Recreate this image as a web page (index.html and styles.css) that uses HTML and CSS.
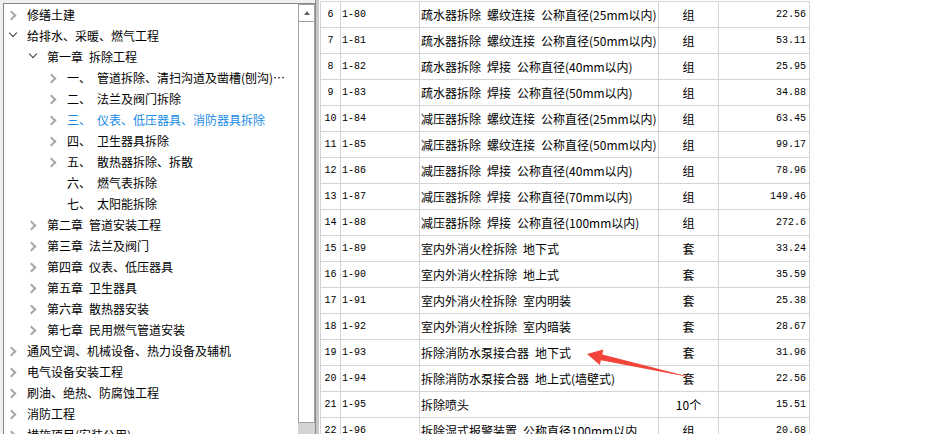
FILE: index.html
```html
<!DOCTYPE html>
<html lang="zh-CN">

<head>
    <meta charset="UTF-8">
    <title>定额库</title>
    <link rel="stylesheet" href="styles.css">
</head>

<body>
    <div class="app">
        <!-- 左侧章节树 -->
        <div class="tree-pane">
            <div class="tree">
                <div class="node l0"><i class="tw closed"></i><span>修缮土建</span></div>
                <div class="node l0"><i class="tw open"></i><span>给排水、采暖、燃气工程</span></div>
                <div class="node l1"><i class="tw open"></i><span>第一章&ensp;拆除工程</span></div>
                <div class="node l2"><i class="tw closed"></i><span>一、&ensp;管道拆除、清扫沟道及凿槽(刨沟)…</span></div>
                <div class="node l2"><i class="tw closed"></i><span>二、&ensp;法兰及阀门拆除</span></div>
                <div class="node l2 sel"><i class="tw closed"></i><span>三、&ensp;仪表、低压器具、消防器具拆除</span></div>
                <div class="node l2"><i class="tw closed"></i><span>四、&ensp;卫生器具拆除</span></div>
                <div class="node l2"><i class="tw closed"></i><span>五、&ensp;散热器拆除、拆散</span></div>
                <div class="node l2"><i class="tw"></i><span>六、&ensp;燃气表拆除</span></div>
                <div class="node l2"><i class="tw"></i><span>七、&ensp;太阳能拆除</span></div>
                <div class="node l1"><i class="tw closed"></i><span>第二章&ensp;管道安装工程</span></div>
                <div class="node l1"><i class="tw closed"></i><span>第三章&ensp;法兰及阀门</span></div>
                <div class="node l1"><i class="tw closed"></i><span>第四章&ensp;仪表、低压器具</span></div>
                <div class="node l1"><i class="tw closed"></i><span>第五章&ensp;卫生器具</span></div>
                <div class="node l1"><i class="tw closed"></i><span>第六章&ensp;散热器安装</span></div>
                <div class="node l1"><i class="tw closed"></i><span>第七章&ensp;民用燃气管道安装</span></div>
                <div class="node l0"><i class="tw closed"></i><span>通风空调、机械设备、热力设备及辅机</span></div>
                <div class="node l0"><i class="tw closed"></i><span>电气设备安装工程</span></div>
                <div class="node l0"><i class="tw closed"></i><span>刷油、绝热、防腐蚀工程</span></div>
                <div class="node l0"><i class="tw closed"></i><span>消防工程</span></div>
                <div class="node l0"><i class="tw closed"></i><span>措施项目(安装公用)</span></div>
            </div>
            <div class="vscroll">
                <div class="sb-up"></div>
                <div class="sb-thumb"></div>
            </div>
        </div>

        <div class="splitter"></div>

        <!-- 右侧定额列表 -->
        <div class="table-pane">
            <div class="grid">
                <div class="row"><div class="c-no num">6</div><div class="c-code num">1-80</div><div class="c-name">疏水器拆除&ensp;螺纹连接&ensp;公称直径(25mm以内)</div><div class="c-unit">组</div><div class="c-price num">22.56</div></div>
                <div class="row"><div class="c-no num">7</div><div class="c-code num">1-81</div><div class="c-name">疏水器拆除&ensp;螺纹连接&ensp;公称直径(50mm以内)</div><div class="c-unit">组</div><div class="c-price num">53.11</div></div>
                <div class="row"><div class="c-no num">8</div><div class="c-code num">1-82</div><div class="c-name">疏水器拆除&ensp;焊接&ensp;公称直径(40mm以内)</div><div class="c-unit">组</div><div class="c-price num">25.95</div></div>
                <div class="row"><div class="c-no num">9</div><div class="c-code num">1-83</div><div class="c-name">疏水器拆除&ensp;焊接&ensp;公称直径(50mm以内)</div><div class="c-unit">组</div><div class="c-price num">34.88</div></div>
                <div class="row"><div class="c-no num">10</div><div class="c-code num">1-84</div><div class="c-name">减压器拆除&ensp;螺纹连接&ensp;公称直径(25mm以内)</div><div class="c-unit">组</div><div class="c-price num">63.45</div></div>
                <div class="row"><div class="c-no num">11</div><div class="c-code num">1-85</div><div class="c-name">减压器拆除&ensp;螺纹连接&ensp;公称直径(50mm以内)</div><div class="c-unit">组</div><div class="c-price num">99.17</div></div>
                <div class="row"><div class="c-no num">12</div><div class="c-code num">1-86</div><div class="c-name">减压器拆除&ensp;焊接&ensp;公称直径(40mm以内)</div><div class="c-unit">组</div><div class="c-price num">78.96</div></div>
                <div class="row"><div class="c-no num">13</div><div class="c-code num">1-87</div><div class="c-name">减压器拆除&ensp;焊接&ensp;公称直径(70mm以内)</div><div class="c-unit">组</div><div class="c-price num">149.46</div></div>
                <div class="row"><div class="c-no num">14</div><div class="c-code num">1-88</div><div class="c-name">减压器拆除&ensp;焊接&ensp;公称直径(100mm以内)</div><div class="c-unit">组</div><div class="c-price num">272.6</div></div>
                <div class="row"><div class="c-no num">15</div><div class="c-code num">1-89</div><div class="c-name">室内外消火栓拆除&ensp;地下式</div><div class="c-unit">套</div><div class="c-price num">33.24</div></div>
                <div class="row"><div class="c-no num">16</div><div class="c-code num">1-90</div><div class="c-name">室内外消火栓拆除&ensp;地上式</div><div class="c-unit">套</div><div class="c-price num">35.59</div></div>
                <div class="row"><div class="c-no num">17</div><div class="c-code num">1-91</div><div class="c-name">室内外消火栓拆除&ensp;室内明装</div><div class="c-unit">套</div><div class="c-price num">25.38</div></div>
                <div class="row"><div class="c-no num">18</div><div class="c-code num">1-92</div><div class="c-name">室内外消火栓拆除&ensp;室内暗装</div><div class="c-unit">套</div><div class="c-price num">28.67</div></div>
                <div class="row"><div class="c-no num">19</div><div class="c-code num">1-93</div><div class="c-name">拆除消防水泵接合器&ensp;地下式</div><div class="c-unit">套</div><div class="c-price num">31.96</div></div>
                <div class="row"><div class="c-no num">20</div><div class="c-code num">1-94</div><div class="c-name">拆除消防水泵接合器&ensp;地上式(墙壁式)</div><div class="c-unit">套</div><div class="c-price num">22.56</div></div>
                <div class="row"><div class="c-no num">21</div><div class="c-code num">1-95</div><div class="c-name">拆除喷头</div><div class="c-unit">10个</div><div class="c-price num">15.51</div></div>
                <div class="row"><div class="c-no num">22</div><div class="c-code num">1-96</div><div class="c-name">拆除湿式报警装置&ensp;公称直径100mm以内</div><div class="c-unit">组</div><div class="c-price num">20.68</div></div>
            </div>
        </div>
    </div>

    <!-- 截图标注箭头 -->
    <svg class="mark" width="926" height="434" viewBox="0 0 926 434">
        <polygon points="587,354 603.3,349.5 602.3,354.4 694,378 600.9,360.2 599.9,365.1" fill="#f2443a" />
    </svg>
</body>

</html>
```

FILE: styles.css
```css
* {
    box-sizing: border-box;
}

body {
    margin: 0;
    width: 926px;
    height: 434px;
    overflow: hidden;
    position: relative;
    background: #f0f0f0;
    color: #000;
    font: 12px "Noto Sans CJK SC", sans-serif;
}

.app {
    display: flex;
    height: 434px;
}

/* 左侧树 */
.tree-pane {
    display: flex;
    width: 312px;
    margin: 3px 0 0 3px;
    border-top: 1px solid #828790;
    border-left: 1px solid #828790;
    background: #fff;
}

.tree {
    flex: 1;
    overflow: hidden;
}

.node {
    display: flex;
    align-items: center;
    height: 21px;
    white-space: nowrap;
}

.l0 {
    padding-left: 4px;
}

.l1 {
    padding-left: 24px;
}

.l2 {
    padding-left: 44px;
}

.sel {
    color: #1a8ce6;
}

.tw {
    position: relative;
    flex: none;
    width: 19px;
    height: 21px;
}

.tw.closed::before {
    content: "";
    position: absolute;
    left: 0;
    top: 8px;
    width: 5px;
    height: 5px;
    border-right: 2px solid #a8a8a8;
    border-bottom: 2px solid #a8a8a8;
    transform: rotate(-45deg);
}

.tw.open::before {
    content: "";
    position: absolute;
    left: 2px;
    top: 5px;
    width: 5px;
    height: 5px;
    border-right: 1.5px solid #404040;
    border-bottom: 1.5px solid #404040;
    transform: rotate(45deg);
}

/* 滚动条 */
.vscroll {
    width: 17px;
    display: flex;
    flex-direction: column;
    background: #d4d4d4;
}

.sb-up {
    height: 18px;
    border: 1px solid #a0a0a0;
    background: #fff;
    display: flex;
    align-items: center;
    justify-content: center;
}

.sb-up::before {
    content: "";
    border-left: 3.5px solid transparent;
    border-right: 3.5px solid transparent;
    border-bottom: 4px solid #606060;
}

.sb-thumb {
    height: 401px;
    border: 1px solid #a0a0a0;
    border-top: none;
    background: #fff;
}

.splitter {
    width: 4px;
    background: #c8c8c8;
    border-left: 1px solid #8c8c8c;
}

/* 右侧表格 */
.table-pane {
    flex: 1;
    background: #fff;
    padding-left: 1px;
}

.grid {
    width: 490px;
    margin-top: 1px;
    border-top: 1px solid #d4d4d4;
}

.row {
    display: grid;
    grid-template-columns: 20px 79px 239px 60px 91px;
    height: 26px;
    border-left: 1px solid #d4d4d4;
}

.row > div {
    border-right: 1px solid #d4d4d4;
    border-bottom: 1px solid #d4d4d4;
    line-height: 25px;
    white-space: nowrap;
    overflow: hidden;
}

.num {
    font-family: "Liberation Mono", monospace;
    font-size: 10px;
}

.c-no {
    text-align: center;
}

.c-code,
.c-name {
    padding-left: 1px;
}

.c-unit {
    text-align: center;
}

.c-price {
    text-align: right;
    padding-right: 3px;
}

.mark {
    position: absolute;
    left: 0;
    top: 0;
    pointer-events: none;
}
```
